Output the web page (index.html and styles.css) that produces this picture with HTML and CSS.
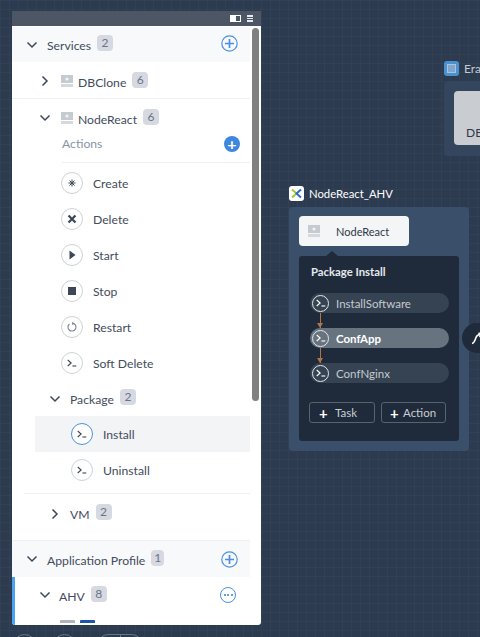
FILE: index.html
```html
<!DOCTYPE html>
<html>
<head>
    <title>Blueprint Editor</title>
    <link rel="stylesheet" href="styles.css">
</head>
<body>
    <svg class="defs" width="0" height="0">
        <symbol id="i-down" viewBox="0 0 12 12"><path d="M1.500 3.500 6 8l4.500-4.500" fill="none" stroke="currentColor" stroke-width="1.500"/></symbol>
        <symbol id="i-right" viewBox="0 0 12 12"><path d="M3.500 1.500 8 6l-4.500 4.500" fill="none" stroke="currentColor" stroke-width="1.500"/></symbol>
        <symbol id="i-plus" viewBox="0 0 17 17"><circle cx="8.500" cy="8.500" r="7.700" fill="none" stroke="currentColor" stroke-width="1.200"/><path d="M8.500 4v9M4 8.500h9" stroke="currentColor" stroke-width="1.700"/></symbol>
        <symbol id="i-service" viewBox="0 0 12 12"><path d="M0 0h12v8H0z" fill="#c6cad1"/><path d="M0 9h12v3H0z" fill="#d5d8dd"/><circle cx="6" cy="4" r="1.600" fill="#f2f3f5"/></symbol>
        <symbol id="i-shell" viewBox="0 0 14 14"><path d="M2 3.500 6 7l-4 3.500" fill="none" stroke="currentColor" stroke-width="1.300"/><path d="M7.500 10.500H12" stroke="currentColor" stroke-width="1.300"/></symbol>
    </svg>

    <div class="canvas">
        <!-- node on the far right, cut off by the window -->
        <div class="app era">
            <div class="app-title"><span class="era-logo"><i></i></span><span>Era</span></div>
            <div class="era-box"><div class="era-card">DB</div></div>
        </div>

        <div class="app node">
            <div class="app-title">
                <span class="node-logo">
                    <svg width="11" height="11" viewBox="0 0 11 11"><path d="M1 1.500 5.500 5.500 1 9.500" fill="none" stroke="#a8c83c" stroke-width="2"/><path d="M10 1.500 5.500 5.500 10 9.500" fill="none" stroke="#2a6fc0" stroke-width="2"/></svg>
                </span>
                <span>NodeReact_AHV</span>
            </div>
            <div class="node-box">
                <div class="node-card">
                    <svg class="node-card-icon" width="12" height="12"><use href="#i-service"/></svg>
                    <span>NodeReact</span>
                </div>
                <div class="popup">
                    <div class="popup-title">Package Install</div>
                    <div class="task">
                        <span class="task-icon"><svg width="12" height="12"><use href="#i-shell"/></svg></span>
                        <span>InstallSoftware</span>
                    </div>
                    <div class="task-arrow"></div>
                    <div class="task task-on">
                        <span class="task-icon"><svg width="12" height="12"><use href="#i-shell"/></svg></span>
                        <span>ConfApp</span>
                    </div>
                    <div class="task-arrow"></div>
                    <div class="task">
                        <span class="task-icon"><svg width="12" height="12"><use href="#i-shell"/></svg></span>
                        <span>ConfNginx</span>
                    </div>
                    <div class="popup-buttons">
                        <div class="popup-btn btn-task"><b>+</b>Task</div>
                        <div class="popup-btn btn-action"><b>+</b>Action</div>
                    </div>
                </div>
            </div>
        </div>

        <div class="side-round">
            <svg width="14" height="14" viewBox="0 0 14 14"><path d="M1 11.500C3.500 11 4 8 5 5.500S7 2.500 10 2.500M7.500 1 10.500 2.500 8.500 5" fill="none" stroke="#fff" stroke-width="1.600"/></svg>
        </div>

        <div class="dock">
            <span class="dock-round"></span>
            <span class="dock-round"></span>
            <span class="dock-pill"></span>
        </div>
    </div>

    <div class="panel">
        <div class="panel-head">
            <span class="layout-icon"></span>
            <span class="menu-icon"><i></i><i></i><i></i></span>
        </div>
        <div class="panel-body">
            <div class="scrollbar"></div>

            <div class="row head-row services-row">
                <svg class="arrow" width="12" height="12"><use href="#i-down"/></svg>
                <span class="name">Services</span><span class="count">2</span>
                <svg class="add" width="17" height="17"><use href="#i-plus"/></svg>
            </div>

            <div class="row service-row dbclone-row">
                <svg class="arrow" width="12" height="12"><use href="#i-right"/></svg>
                <svg class="service-icon" width="12" height="12"><use href="#i-service"/></svg>
                <span class="name">DBClone</span><span class="count">6</span>
            </div>

            <div class="row service-row nodereact-row">
                <svg class="arrow" width="12" height="12"><use href="#i-down"/></svg>
                <svg class="service-icon" width="12" height="12"><use href="#i-service"/></svg>
                <span class="name">NodeReact</span><span class="count">6</span>
            </div>

            <div class="actions-row">
                <span>Actions</span>
                <span class="add-solid">+</span>
            </div>

            <div class="row item-row first-item">
                <span class="item-icon"><svg width="12" height="12" viewBox="0 0 12 12"><path d="M6 2.500v7M2.500 6h7M3.500 3.500l5 5M8.500 3.500l-5 5" stroke="#3d4757" stroke-width="1"/></svg></span>
                <span class="name">Create</span>
            </div>
            <div class="row item-row">
                <span class="item-icon"><svg width="12" height="12" viewBox="0 0 12 12"><path d="M2.500 2.500l7 7M9.500 2.500l-7 7" stroke="#3d4757" stroke-width="2.200"/></svg></span>
                <span class="name">Delete</span>
            </div>
            <div class="row item-row">
                <span class="item-icon"><svg width="12" height="12" viewBox="0 0 12 12"><path d="M3.500 1.500 9.500 6l-6 4.500z" fill="#3d4757"/></svg></span>
                <span class="name">Start</span>
            </div>
            <div class="row item-row">
                <span class="item-icon"><svg width="12" height="12" viewBox="0 0 12 12"><path d="M2 2h8v8H2z" fill="#3d4757"/></svg></span>
                <span class="name">Stop</span>
            </div>
            <div class="row item-row">
                <span class="item-icon"><svg width="12" height="12" viewBox="0 0 12 12"><path d="M7.800 2.500A4 4 0 1 1 3.400 3" fill="none" stroke="#7c8491" stroke-width="1.100"/><path d="M6 .8 8.500 2.500 6.300 4.300z" fill="#7c8491"/></svg></span>
                <span class="name">Restart</span>
            </div>
            <div class="row item-row">
                <span class="item-icon"><svg width="12" height="12" color="#3d4757"><use href="#i-shell"/></svg></span>
                <span class="name">Soft Delete</span>
            </div>

            <div class="row package-row">
                <svg class="arrow" width="12" height="12"><use href="#i-down"/></svg>
                <span class="name">Package</span><span class="count">2</span>
            </div>
            <div class="row item-row sub-item selected">
                <span class="item-icon"><svg width="12" height="12" color="#3d4757"><use href="#i-shell"/></svg></span>
                <span class="name">Install</span>
            </div>
            <div class="row item-row sub-item">
                <span class="item-icon"><svg width="12" height="12" color="#3d4757"><use href="#i-shell"/></svg></span>
                <span class="name">Uninstall</span>
            </div>

            <div class="row package-row vm-row">
                <svg class="arrow" width="12" height="12"><use href="#i-right"/></svg>
                <span class="name">VM</span><span class="count">2</span>
            </div>

            <div class="row head-row profile-row">
                <svg class="arrow" width="12" height="12"><use href="#i-down"/></svg>
                <span class="name">Application Profile</span><span class="count">1</span>
                <svg class="add" width="17" height="17"><use href="#i-plus"/></svg>
            </div>

            <div class="ahv-wrap">
                <div class="row ahv-row">
                    <svg class="arrow" width="12" height="12"><use href="#i-down"/></svg>
                    <span class="name">AHV</span><span class="count">8</span>
                    <span class="more"><i></i><i></i><i></i></span>
                </div>
                <div class="ahv-next"><span class="tab-grey"></span><span class="tab-blue"></span></div>
            </div>
        </div>
    </div>
</body>
</html>
```

FILE: styles.css
```css
* {
    box-sizing: border-box;
}

html, body {
    margin: 0;
    height: 637px;
    overflow: hidden;
}

body {
    font-family: Lato, "Open Sans", sans-serif;
    font-size: 12.200px;
    color: #434c5b;
    position: relative;
}

.defs {
    position: absolute;
}

/* canvas behind the panel */
.canvas {
    position: absolute;
    left: 0;
    top: 0;
    width: 480px;
    height: 637px;
    overflow: hidden;
    background-color: #2d3b50;
    background-image:
        linear-gradient(rgba(255, 255, 255, 0.025) 1px, transparent 1px),
        linear-gradient(90deg, rgba(255, 255, 255, 0.025) 1px, transparent 1px);
    background-size: 9px 9px;
}

.app {
    position: absolute;
    color: #fff;
}

.app-title {
    display: flex;
    align-items: center;
    gap: 5px;
    height: 15px;
    font-size: 11.300px;
}

.node {
    left: 289px;
    top: 186px;
    width: 180px;
}

.node-logo {
    width: 15px;
    height: 15px;
    border-radius: 3px;
    background: #fff;
    display: flex;
    align-items: center;
    justify-content: center;
}

.node-box {
    margin-top: 6px;
    height: 244px;
    padding: 9px 10px;
    background: #3a506a;
    border-radius: 4px;
}

.node-card {
    width: 110px;
    height: 30px;
    background: #f4f5f6;
    border-radius: 4px;
    color: #2f3947;
    font-size: 11px;
    display: flex;
    align-items: center;
    padding-left: 9px;
    gap: 16px;
}

.popup {
    position: relative;
    margin-top: 10px;
    width: 160px;
    height: 185px;
    background: #1f2b3a;
    border-radius: 3px;
    padding: 9px 10px;
}

.popup::before {
    content: "";
    position: absolute;
    left: 27px;
    top: -5px;
    border-left: 6px solid transparent;
    border-right: 6px solid transparent;
    border-bottom: 5px solid #1f2b3a;
}

.popup-title {
    font-size: 11.300px;
    font-weight: 700;
    color: #e6e9ed;
    margin-left: 2px;
    margin-bottom: 15px;
    line-height: 13px;
}

.task {
    width: 139px;
    height: 20px;
    margin-left: 1px;
    border-radius: 10px;
    background: #364352;
    color: #c5cad1;
    font-size: 11.500px;
    display: flex;
    align-items: center;
    gap: 7px;
    padding-left: 2px;
}

.task-on {
    background: #67747f;
    color: #fff;
    font-weight: 700;
}

.task-icon {
    width: 17px;
    height: 17px;
    border: 1px solid #e4e7ea;
    border-radius: 50%;
    display: flex;
    align-items: center;
    justify-content: center;
    color: #fff;
}

.task-arrow {
    position: relative;
    width: 1px;
    height: 15px;
    margin-left: 11px;
    background: #ad7548;
}

.task-arrow::after {
    content: "";
    position: absolute;
    left: -3px;
    bottom: 0;
    border-left: 3.500px solid transparent;
    border-right: 3.500px solid transparent;
    border-top: 5px solid #ad7548;
}

.popup-buttons {
    display: flex;
    gap: 6px;
    margin-top: 19px;
}

.popup-btn {
    height: 21px;
    border: 1px solid #59636f;
    border-radius: 3px;
    color: #c9ced4;
    font-size: 11.500px;
    display: flex;
    align-items: center;
    padding-left: 9px;
}

.popup-btn b {
    color: #fff;
    font-size: 15px;
    width: 8px;
    text-align: center;
    margin-right: 8px;
}

.btn-task {
    width: 66px;
}

.btn-action {
    width: 65px;
    padding-left: 8px;
}

.btn-action b {
    margin-right: 5px;
}

.side-round {
    position: absolute;
    left: 462px;
    top: 323px;
    width: 36px;
    height: 30px;
    border-radius: 15px;
    background: #1f2b3a;
    padding: 9px 0 0 9px;
}

.era {
    left: 444px;
    top: 61px;
    width: 60px;
    color: #c3cad3;
}

.era .app-title {
    font-size: 12px;
}

.era-logo {
    width: 15px;
    height: 15px;
    border-radius: 3px;
    background: #4b90cf;
    display: flex;
    align-items: center;
    justify-content: center;
}

.era-logo i {
    width: 9px;
    height: 9px;
    background: #7fa6cd;
    border: 1px solid #a9c4dc;
}

.era-box {
    margin-top: 5px;
    height: 75px;
    padding: 10px;
    background: #33465d;
    border-radius: 4px;
}

.era-card {
    height: 54px;
    width: 60px;
    background: #c9ccd1;
    border-radius: 4px;
    color: #2f3947;
    font-size: 12px;
    padding: 34px 0 0 12px;
}

.dock {
    position: absolute;
    left: 13px;
    top: 634px;
    display: flex;
    gap: 17px;
}

.dock-round {
    width: 23px;
    height: 23px;
    border: 1px solid #6a7888;
    border-radius: 50%;
}

.dock-pill {
    width: 46px;
    height: 23px;
    margin-left: 4px;
    border: 1px solid #6a7888;
    border-radius: 12px;
    background: linear-gradient(90deg, transparent 22px, #6a7888 22px, #6a7888 23px, transparent 23px);
}

/* left panel */
.panel {
    position: absolute;
    left: 12px;
    top: 11px;
    width: 249px;
    height: 614px;
    border-radius: 0 0 3px 3px;
    background: #fff;
    overflow: hidden;
}

.panel-head {
    height: 15px;
    background: #4c5665;
    display: flex;
    align-items: center;
    justify-content: flex-end;
    gap: 6px;
    padding-right: 8px;
}

.layout-icon {
    width: 11px;
    height: 7px;
    background: linear-gradient(90deg, #fff 5px, #4c5665 5px);
    border: 1px solid #fff;
}

.menu-icon {
    width: 6px;
    display: flex;
    flex-direction: column;
    gap: 1px;
}

.menu-icon i {
    height: 1.500px;
    background: #e8eaed;
}

.panel-body {
    position: relative;
    height: 599px;
    padding: 1px 11px 0 0;
    overflow: hidden;
}

.scrollbar {
    position: absolute;
    right: 2px;
    top: 2px;
    width: 7px;
    height: 373px;
    background: #808080;
    border-radius: 4px;
}

.row {
    display: flex;
    align-items: center;
}

.arrow {
    color: #3d4757;
    flex: none;
}

.name {
    white-space: nowrap;
    margin-top: 2px;
}

.count {
    min-width: 16px;
    height: 16px;
    padding: 0 3px;
    margin: -3px 0 0 6px;
    border-radius: 4px;
    background: #d6d9e1;
    color: #6b7484;
    font-size: 12px;
    line-height: 16px;
    text-align: center;
}

.add {
    margin-left: auto;
    margin-right: 12px;
    color: #4a90e2;
}

.services-row .add {
    margin-top: -2px;
}

.head-row {
    height: 35px;
    padding-left: 14px;
    background: #f8f9fb;
}

.head-row .name {
    margin-left: 9px;
}

.service-row {
    padding-left: 27px;
}

.service-row .name {
    margin-left: 5px;
}

.service-icon {
    margin-left: 10px;
}

.dbclone-row {
    height: 37px;
    padding-top: 2px;
    border-bottom: 1px solid #eef0f3;
}

.nodereact-row {
    height: 38px;
}

.actions-row {
    height: 26px;
    margin-left: 50px;
    padding: 0 10px 12px 0;
    color: #8a94a6;
    border-bottom: 1px solid #eef0f3;
    display: flex;
    align-items: center;
    justify-content: space-between;
}

.add-solid {
    width: 16px;
    height: 16px;
    border-radius: 50%;
    background: #3f87dc;
    color: #fff;
    font-size: 16px;
    font-weight: 700;
    line-height: 15px;
    text-align: center;
}

.item-row {
    height: 36px;
    padding-left: 49px;
    gap: 10px;
}

.item-row .name {
    margin-top: 0;
}

.first-item {
    margin-top: 2px;
}

.item-icon {
    width: 22px;
    height: 22px;
    border: 1px solid #cfd2d6;
    border-radius: 50%;
    display: flex;
    align-items: center;
    justify-content: center;
    background: #fff;
}

.sub-item {
    margin-left: 23px;
    padding-left: 36px;
}

.selected {
    background: #f3f4f6;
}

.selected .item-icon {
    border-color: #4a90e2;
}

.package-row {
    height: 35px;
    padding-left: 37px;
}

.package-row .name {
    margin-left: 9px;
}

.vm-row {
    height: 47px;
    margin-left: 13px;
    padding: 0 0 7px 24px;
    margin-top: 5px;
    border-top: 1px solid #eef0f3;
}

.profile-row {
    height: 37px;
    border-top: 1px solid #eef0f3;
}

.profile-row .count {
    min-width: 13px;
}

.ahv-wrap {
    position: relative;
    height: 60px;
    border-left: 3px solid #4aa3f0;
    padding-left: 24px;
}

.ahv-row {
    height: 36px;
    margin-bottom: 7px;
}

.ahv-row .name {
    margin-left: 8px;
}

.more {
    margin-left: auto;
    margin-right: 14px;
    width: 16px;
    height: 16px;
    border: 1px solid #4a90e2;
    border-radius: 50%;
    display: flex;
    align-items: center;
    justify-content: center;
    gap: 1.500px;
}

.more i {
    width: 2px;
    height: 2px;
    border-radius: 50%;
    background: #3f7cc8;
}

.ahv-next {
    display: flex;
    gap: 5px;
    margin-left: 21px;
}

.tab-grey,
.tab-blue {
    width: 15px;
    height: 3px;
    border-radius: 1px 1px 0 0;
}

.tab-grey {
    background: #aeb4bb;
}

.tab-blue {
    background: #1d55a8;
}
```
